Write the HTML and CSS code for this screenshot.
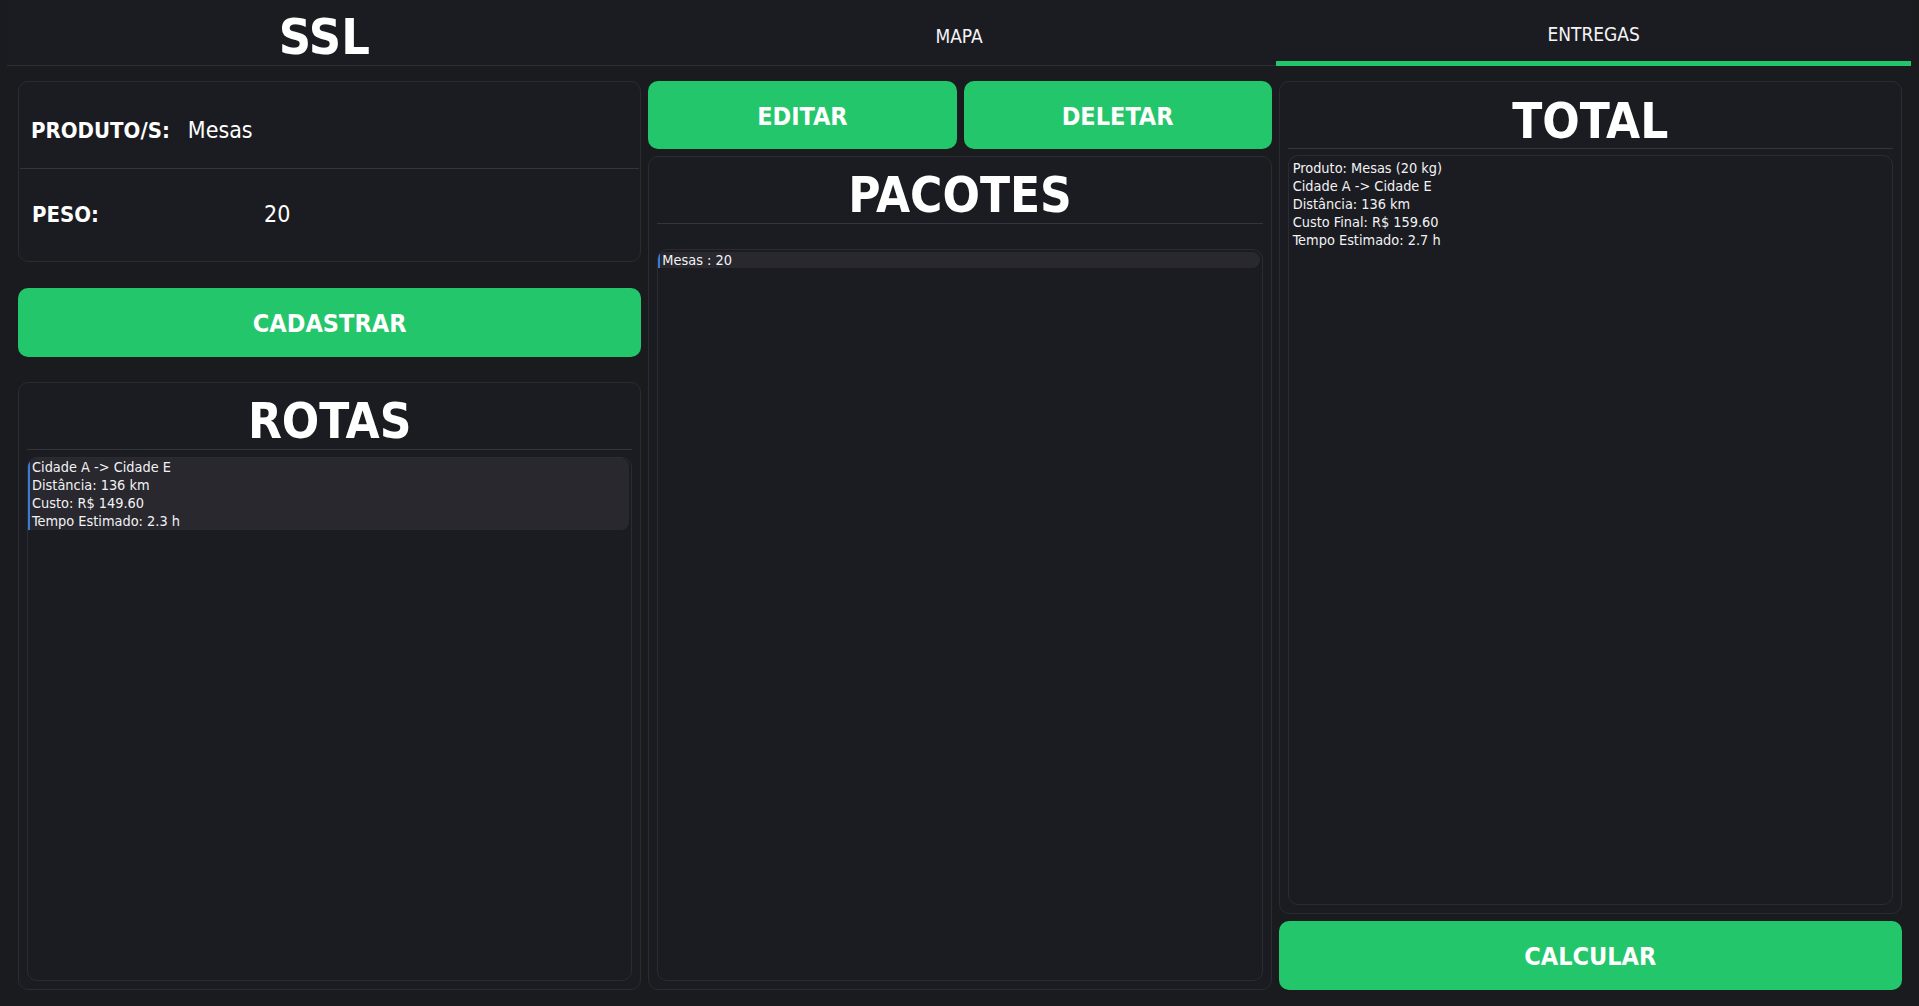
FILE: index.html
```html
<!DOCTYPE html>
<html lang="pt-BR">
<head>
<meta charset="utf-8">
<title>SSL</title>
<link rel="stylesheet" href="styles.css">
</head>
<body>
<header class="tabs">
  <div class="tab tab-brand">SSL</div>
  <div class="tab">MAPA</div>
  <div class="tab tab-active">ENTREGAS</div>
</header>
<main class="main">
  <section class="col">
    <div class="card form-card">
      <div class="form-row form-row-first">
        <span class="form-label">PRODUTO/S:</span>
        <span class="form-value value-produto">Mesas</span>
      </div>
      <div class="form-row form-row-second">
        <span class="form-label">PESO:</span>
        <span class="form-value value-peso">20</span>
      </div>
    </div>
    <button class="btn btn-cadastrar">CADASTRAR</button>
    <div class="card panel">
      <h2 class="panel-title">ROTAS</h2>
      <div class="list list-rotas">
        <div class="list-item">Cidade A -&gt; Cidade E<br>Distância: 136 km<br>Custo: R$ 149.60<br>Tempo Estimado: 2.3 h</div>
      </div>
    </div>
  </section>
  <section class="col">
    <div class="btn-row">
      <button class="btn btn-half">EDITAR</button>
      <button class="btn btn-half">DELETAR</button>
    </div>
    <div class="card panel">
      <h2 class="panel-title">PACOTES</h2>
      <div class="list list-pacotes">
        <div class="list-item list-item-single">Mesas : 20</div>
      </div>
    </div>
  </section>
  <section class="col">
    <div class="card panel">
      <h2 class="panel-title title-total">TOTAL</h2>
      <div class="list list-total">
        <div class="text-block">Produto: Mesas (20 kg)<br>Cidade A -&gt; Cidade E<br>Distância: 136 km<br>Custo Final: R$ 159.60<br>Tempo Estimado: 2.7 h</div>
      </div>
    </div>
    <button class="btn btn-calcular">CALCULAR</button>
  </section>
</main>
</body>
</html>
```

FILE: styles.css
```css
* { box-sizing: border-box; }

html, body {
  margin: 0;
  padding: 0;
  height: 100%;
}

body {
  background: #1a1b1e;
  color: #ffffff;
  font-family: "DejaVu Sans Condensed", "DejaVu Sans", sans-serif;
  font-stretch: condensed;
  overflow: hidden;
}

.tabs {
  display: flex;
  height: 66px;
  margin: 0 8px 0 7px;
  background: #1b1c21;
  border-bottom: 1px solid #2d2e33;
}

.tab {
  flex: 1;
  position: relative;
  display: flex;
  align-items: center;
  justify-content: center;
  font-size: 19px;
  padding-top: 6px;
  color: #f4f4f6;
}

.tab-brand {
  font-size: 50px;
  font-weight: bold;
  padding-top: 8px;
  color: #ffffff;
}

.tab-active {
  padding-top: 3px;
}

.tab-active::after {
  content: "";
  position: absolute;
  left: 0;
  right: 0;
  bottom: -1px;
  height: 5px;
  background: #23c66a;
}

.main {
  display: grid;
  grid-template-columns: repeat(3, 1fr);
  column-gap: 7px;
  padding: 15px 17px 16px 18px;
  height: calc(100% - 66px);
}

.col {
  display: flex;
  flex-direction: column;
  min-height: 0;
}

.card {
  background: #1b1c21;
  border: 1px solid #2b2c31;
  border-radius: 10px;
}

.form-card {
  height: 181px;
  display: flex;
  flex-direction: column;
}

.form-row {
  display: flex;
  align-items: center;
  padding-left: 13px;
}

.form-row-first {
  height: 87px;
  padding-top: 10px;
  border-bottom: 1px solid #34353a;
  margin: 0 1px;
  padding-left: 11px;
}

.form-row-second {
  flex: 1;
  padding-bottom: 2px;
}

.form-label {
  font-size: 22px;
  font-weight: bold;
}

.form-value {
  font-size: 23px;
  font-weight: normal;
}

.value-produto { margin-left: 18px; }
.value-peso { margin-left: 165px; }

.btn {
  border: none;
  border-radius: 10px;
  background: #23c66a;
  color: #ffffff;
  font-family: inherit;
  font-stretch: condensed;
  font-size: 25px;
  font-weight: bold;
  cursor: pointer;
  padding: 0;
}

.btn-cadastrar {
  height: 69px;
  margin: 26px 0 25px;
  padding-top: 2px;
}

.btn-row {
  display: flex;
  gap: 7px;
  height: 68px;
  margin-bottom: 7px;
}

.btn-half {
  flex: 1;
  padding-top: 2px;
}

.btn-calcular {
  height: 69px;
  margin-top: 7px;
  padding-top: 2px;
}

.panel {
  flex: 1;
  display: flex;
  flex-direction: column;
  padding: 0 8px 8px 8px;
  min-height: 0;
}

.panel-title {
  margin: 0;
  padding-top: 11px;
  height: 67px;
  line-height: 55px;
  font-size: 49px;
  font-weight: bold;
  text-align: center;
  border-bottom: 1px solid #34353a;
}

.title-total {
  font-size: 49px;
  padding-top: 13px;
  line-height: 53px;
}

.list {
  flex: 1;
  border: 1px solid #2b2c31;
  border-radius: 10px;
  font-size: 14.4px;
  line-height: 18px;
  color: #f2f2f4;
  overflow: hidden;
}

.list-rotas { margin-top: 7px; }
.list-pacotes { margin-top: 25px; padding-top: 2px; }
.list-total { margin-top: 6px; }

.list-item {
  background: #28282e;
  border-left: 2px solid #3a7bd5;
  border-radius: 0 8px 8px 0;
  padding: 0 0 0 2px;
  margin-right: 2px;
}

.list-item-single {
  line-height: 16px;
}

.text-block {
  padding: 3px 0 0 4px;
  line-height: 18px;
}
```
